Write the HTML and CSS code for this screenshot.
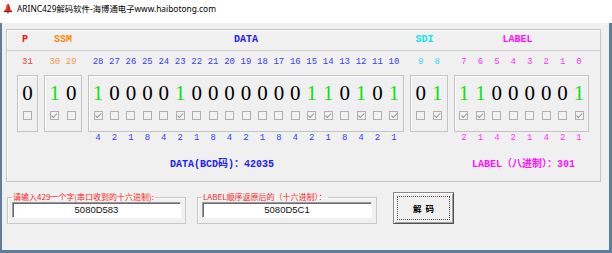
FILE: index.html
```html
<!DOCTYPE html>
<html lang="zh-CN">
  <head>
    <meta charset="UTF-8" />
    <meta name="viewport" content="width=device-width, initial-scale=1.0" />
    <title>ARINC429解码软件</title>
    <link rel="stylesheet" href="styles.css">
  </head>
  <body>
    <div class="titlebar">
      <svg class="app-icon" viewBox="0 0 12 12" width="10" height="11">
        <path d="M6 0.6C4.9 0.6 4.4 1.6 4.1 3L2.6 8.4H9.4L7.9 3C7.6 1.6 7.1 0.6 6 0.6Z" fill="#e31b12" />
        <path d="M5.2 2.2C5 3 4.6 5 4.3 7.2" stroke="#ff8a7a" stroke-width="0.8" fill="none" />
        <path d="M1.2 8.4H10.8V10.3H1.2Z" fill="#9c0b06" />
        <circle cx="6" cy="11" r="0.9" fill="#5a0a05" />
      </svg>
      <span class="title">ARINC429解码软件-海博通电子www.haibotong.com</span>
    </div>

    <div class="client">
      <div class="panel">
        <!-- section names -->
        <div class="grid head">
          <div class="hd red hd-p">P</div>
          <div class="hd orange">SSM</div>
          <div class="hd blue">DATA</div>
          <div class="hd cyan hd-sdi">SDI</div>
          <div class="hd magenta hd-label">LABEL</div>
        </div>

        <!-- bit numbers -->
        <div class="grid nums">
          <div class="row red-l"><span>31</span></div>
          <div class="row orange-l"><span>30</span><span>29</span></div>
          <div class="row blue-l">
            <span>28</span><span>27</span><span>26</span><span>25</span><span>24</span><span>23</span><span>22</span><span>21</span><span>20</span><span>19</span><span>18</span><span>17</span><span>16</span><span>15</span><span>14</span><span>13</span><span>12</span><span>11</span><span>10</span>
          </div>
          <div class="row cyan-l"><span>9</span><span>8</span></div>
          <div class="row magenta-l">
            <span>7</span><span>6</span><span>5</span><span>4</span><span>3</span><span>2</span><span>1</span><span>0</span>
          </div>
        </div>

        <!-- bit values -->
        <div class="grid boxes">
          <div class="box">
            <div class="row digits"><span>0</span></div>
            <div class="row checks"><span class="cb"></span></div>
          </div>
          <div class="box">
            <div class="row digits"><span class="one">1</span><span>0</span></div>
            <div class="row checks"><span class="cb on"></span><span class="cb"></span></div>
          </div>
          <div class="box">
            <div class="row digits">
              <span class="one">1</span><span>0</span><span>0</span><span>0</span><span>0</span><span class="one">1</span><span>0</span><span>0</span><span>0</span><span>0</span><span>0</span><span>0</span><span>0</span><span class="one">1</span><span class="one">1</span><span>0</span><span class="one">1</span><span>0</span><span class="one">1</span>
            </div>
            <div class="row checks">
              <span class="cb on"></span><span class="cb"></span><span class="cb"></span><span class="cb"></span><span class="cb"></span><span class="cb on"></span><span class="cb"></span><span class="cb"></span><span class="cb"></span><span class="cb"></span><span class="cb"></span><span class="cb"></span><span class="cb"></span><span class="cb on"></span><span class="cb on"></span><span class="cb"></span><span class="cb on"></span><span class="cb"></span><span class="cb on"></span>
            </div>
          </div>
          <div class="box">
            <div class="row digits"><span>0</span><span class="one">1</span></div>
            <div class="row checks"><span class="cb"></span><span class="cb on"></span></div>
          </div>
          <div class="box">
            <div class="row digits">
              <span class="one">1</span><span class="one">1</span><span>0</span><span>0</span><span>0</span><span>0</span><span>0</span><span class="one">1</span>
            </div>
            <div class="row checks">
              <span class="cb on"></span><span class="cb on"></span><span class="cb"></span><span class="cb"></span><span class="cb"></span><span class="cb"></span><span class="cb"></span><span class="cb on"></span>
            </div>
          </div>
        </div>

        <!-- BCD / octal weights -->
        <div class="grid weights">
          <div></div>
          <div></div>
          <div class="row blue-l">
            <span>4</span><span>2</span><span>1</span><span>8</span><span>4</span><span>2</span><span>1</span><span>8</span><span>4</span><span>2</span><span>1</span><span>8</span><span>4</span><span>2</span><span>1</span><span>8</span><span>4</span><span>2</span><span>1</span>
          </div>
          <div></div>
          <div class="row magenta-l">
            <span>2</span><span>1</span><span>4</span><span>2</span><span>1</span><span>4</span><span>2</span><span>1</span>
          </div>
        </div>

        <div class="results">
          <span class="blue">DATA(BCD码)：42035</span>
          <span class="magenta">LABEL（八进制）：301</span>
        </div>
      </div>

      <div class="controls">
        <fieldset class="group g1">
          <legend>请输入429一个字(串口收到的十六进制):</legend>
          <div class="field">5080D583</div>
        </fieldset>
        <fieldset class="group g2">
          <legend>LABEL顺序返原后的（十六进制）：</legend>
          <div class="field">5080D5C1</div>
        </fieldset>
        <button class="btn">解码</button>
      </div>
    </div>
  </body>
</html>
```

FILE: styles.css
```css
body {
  margin: 0;
  background-color: #f0f0f0;
  font-family: "Liberation Sans", "Noto Sans CJK SC", sans-serif;
  width: 612px;
  height: 253px;
  overflow: hidden;
}

/* window chrome */
.titlebar {
  height: 23px;
  background-color: #ffffff;
  display: flex;
  align-items: flex-start;
  padding: 2px 0 0 3px;
  box-sizing: border-box;
}
.app-icon {
  margin: 1px 4px 0 0;
}
.title {
  font-family: "Noto Sans", "Noto Sans CJK SC", sans-serif;
  font-size: 8.4px;
  line-height: 13px;
  color: #000;
}
.client {
  height: 230px;
  box-sizing: border-box;
  border-left: 2px solid #5f7e9c;
  border-right: 3px solid #5f7e9c;
  border-bottom: 3px solid #5f7e9c;
  overflow: hidden;
}

/* bit panel */
.panel {
  margin: 6px 8px 0 4px;
  border: 1px solid #c6c6c6;
  box-shadow: inset 1px 1px #fafafa;
  padding-bottom: 10px;
}
.grid {
  display: grid;
  grid-template-columns: 21px 38px 316px 38px 135px;
  column-gap: 6px;
  padding-left: 10px;
}
.head {
  height: 20px;
  border-bottom: 1px solid #d2d2d2;
}
.hd {
  font-family: "Liberation Mono", "Noto Sans CJK SC", monospace;
  font-weight: bold;
  font-size: 10px;
  line-height: 20px;
  text-align: center;
}
.hd-p {
  padding-right: 5px;
}
.hd-sdi {
  padding-right: 9px;
}
.hd-label {
  padding-right: 8px;
}

.row {
  display: flex;
  justify-content: center;
}
.row > span {
  width: 16.44px;
  flex: none;
  text-align: center;
}
.nums {
  margin-top: 4px;
}
.nums .row, .weights .row {
  font-family: "Liberation Mono", monospace;
  font-size: 9px;
  line-height: 14px;
}
.weights .row {
  line-height: 12px;
}

.box {
  border: 1px solid #c4c4c4;
  box-shadow: inset 1px 1px #fbfbfb;
  height: 57px;
  box-sizing: border-box;
  padding-top: 6px;
}
.boxes {
  margin-top: 6px;
}
.digits {
  font-family: "Liberation Serif", serif;
  font-size: 21px;
  line-height: 22px;
  color: #000;
}
.digits .one {
  color: #10e010;
}
.checks {
  margin-top: 5px;
  height: 13px;
  align-items: center;
}
.row > .cb {
  position: relative;
  width: 9px;
  height: 9px;
  margin: 0 3.72px;
  box-sizing: border-box;
  border: 1px solid #b0b0b0;
  background-color: #f2f2f2;
}
.cb.on::after {
  content: "";
  position: absolute;
  left: 2.2px;
  top: 0.2px;
  width: 2px;
  height: 4.5px;
  border: solid #8e8e8e;
  border-width: 0 1px 1px 0;
  transform: rotate(45deg);
}

.results {
  display: flex;
  justify-content: space-between;
  margin-top: 15px;
  padding: 0 25px 0 163px;
  font-family: "Liberation Mono", "Noto Sans CJK SC", monospace;
  font-weight: bold;
  font-size: 10px;
  line-height: 12px;
}

/* colours */
.red { color: #ff1010; }
.orange { color: #ff8a00; }
.blue { color: #2020ff; }
.cyan { color: #10e0f0; }
.magenta { color: #ff10ff; }
.red-l { color: #ff3c3c; }
.orange-l { color: #ff9a40; }
.blue-l { color: #3a3aff; }
.cyan-l { color: #30d8f0; }
.magenta-l { color: #ff30ff; }

/* bottom controls */
.controls {
  display: flex;
  align-items: flex-end;
  margin: 10px 0 0 5px;
}
.group {
  margin: 0;
  padding: 0 4px 5px 4px;
  border: 1px solid #c8c8c8;
  box-shadow: inset 1px 1px #fafafa;
  min-width: 0;
  box-sizing: border-box;
}
.g1 {
  width: 179px;
}
.g2 {
  width: 180px;
  margin-left: 11px;
}
.group legend {
  padding: 0 1px;
  font-family: "Noto Sans CJK SC", sans-serif;
  font-size: 8px;
  line-height: 10px;
  color: #ff2020;
}
.field {
  height: 16px;
  box-sizing: border-box;
  background-color: #ffffff;
  border-top: 1px solid #9a9a9a;
  border-left: 1px solid #9a9a9a;
  border-right: 1px solid #ffffff;
  border-bottom: 1px solid #ffffff;
  box-shadow: inset 1px 1px #6a6a6a;
  font-family: "Liberation Sans", sans-serif;
  font-size: 9.5px;
  line-height: 14px;
  text-align: center;
  color: #111;
}
.btn {
  width: 61px;
  height: 32px;
  margin: 0 0 0 16px;
  padding: 0;
  background-color: #f0f0f0;
  border: 1px solid #8a8a8a;
  border-right-color: #505050;
  border-bottom-color: #505050;
  box-shadow: inset 1px 1px #ffffff, inset -1px -1px #a0a0a0;
  outline: 1px dotted #505050;
  outline-offset: -5px;
  font-family: "Noto Sans CJK SC", sans-serif;
  font-weight: bold;
  font-size: 8.5px;
  letter-spacing: 4px;
  text-indent: 4px;
  color: #000;
}
```
